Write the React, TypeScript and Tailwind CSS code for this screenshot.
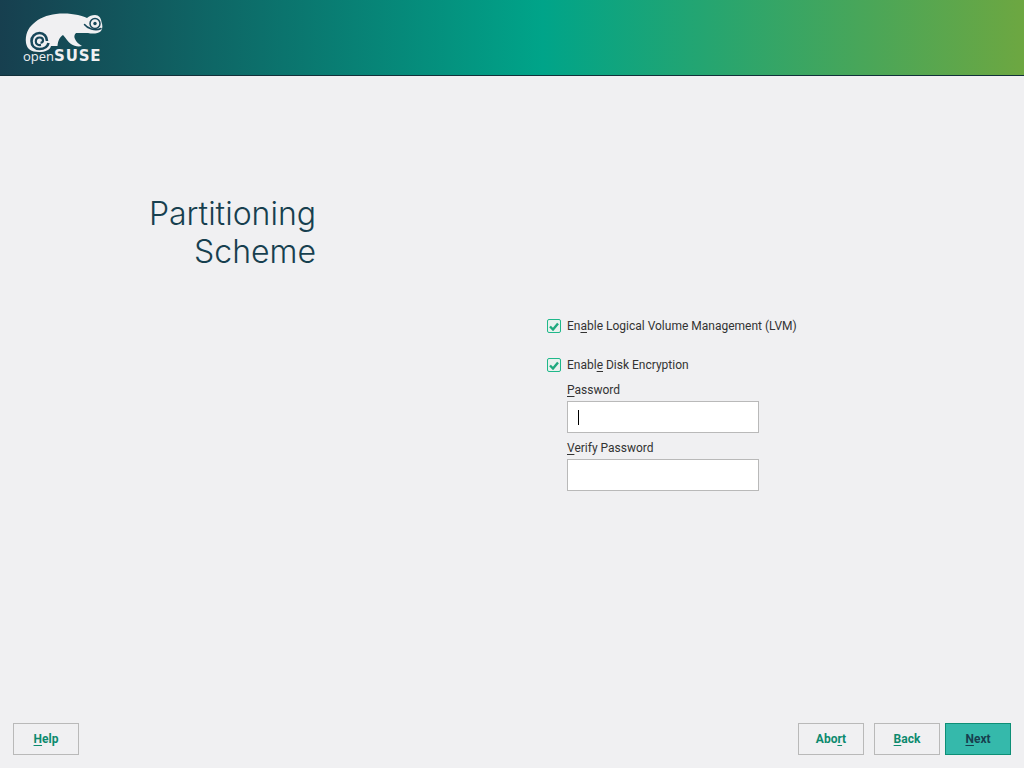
function Mnemonic({ text, at }: { text: string; at: number }) {
  return (
    <>
      {text.slice(0, at)}
      <span className="underline underline-offset-2">{text[at]}</span>
      {text.slice(at + 1)}
    </>
  );
}

function Logo() {
  return (
    <div className="relative w-[84px] h-[52px] ml-[22px] mt-[12px]">
      <svg width="84" height="42" viewBox="22 12 84 42" className="block">
        <path
          fill="#f0f0f2"
          d="M26 43C25 35 28 28 33 24C39 18 47 15 56 14C65 13 72 14 78 15C82 16 85 17 87 18C89 16 92 15 95 15C99 15 101 18 101.500 22C102.500 25 103 28 101 31C98 34 92 34 88 33C84 33 79 33 76 33C74 35 74 37 75 39C76 42 79 44 82 46C78 47 74 46 71 44C68 42 66 38 63 35C60 37 58 40 57.500 46L51 46C50 50 45 52 39 52C31 52 27 49 26 43Z"
        />
        <path
          fill="none"
          stroke="#17475a"
          strokeWidth="2.6"
          d="M48.500 43C47.500 47 44 49 39.500 49C34.500 49 31.500 45.500 31.500 41C31.500 36.500 35 33 39.500 33C44 33 47 36.500 47 41"
        />
        <path
          fill="none"
          stroke="#17475a"
          strokeWidth="2.200"
          d="M41 45C38 45.500 35.800 44 35.800 41.500C35.800 39 37.500 37.500 39.800 37.500C41.800 37.500 43 39 43 40.500C43 42 42 42.800 40.500 42.500"
        />
        <path fill="none" stroke="#17475a" strokeWidth="1.500" strokeLinecap="round" d="M84.500 24.500C87 28 95 31.500 101 28.500" />
        <circle cx="95" cy="23.500" r="5" fill="#f0f0f2" stroke="#17475a" strokeWidth="1.500" />
        <circle cx="95" cy="23.500" r="1.700" fill="#17475a" />
      </svg>
      <div className="absolute left-[1px] top-[37px] flex items-baseline text-[#f0f0f2] leading-none">
        <span className="text-[13px] font-['Open_Sans',sans-serif]">open</span>
        <span className="text-[15px] font-bold tracking-[0.8px] font-['DejaVu_Sans',sans-serif]">SUSE</span>
      </div>
    </div>
  );
}

function Check({ label, at }: { label: string; at: number }) {
  return (
    <label className="flex items-center gap-[6px] h-[20px]">
      <span className="w-[14px] h-[14px] rounded-[2px] border border-[#1fb88a] bg-[#e9f1ee] flex items-center justify-center">
        <svg width="10" height="9" viewBox="0 0 10 9">
          <path d="M1 4.500L4 7.500L9 1.500" fill="none" stroke="#1fa97e" strokeWidth="2.400" />
        </svg>
      </span>
      <span>
        <Mnemonic text={label} at={at} />
      </span>
    </label>
  );
}

function Field({ label, caret }: { label: string; caret?: boolean }) {
  return (
    <div className="flex flex-col">
      <span className="h-[22px] leading-[22px]">
        <Mnemonic text={label} at={0} />
      </span>
      <div className="w-[192px] h-[32px] bg-white border border-[#b9b9b9] flex items-center pl-[10px]">
        {caret && <span className="w-px h-[15px] bg-black" />}
      </div>
    </div>
  );
}

function Btn({ label, at, primary }: { label: string; at: number; primary?: boolean }) {
  return (
    <button
      className={
        primary
          ? "w-[66px] h-[32px] border border-[#0d8f76] bg-[#35b9ab] text-[#173f4f] font-bold text-[12px]"
          : "w-[66px] h-[32px] border border-[#b9b9b9] text-[#0c8a6e] font-bold text-[12px]"
      }
    >
      <Mnemonic text={label} at={at} />
    </button>
  );
}

export default function App() {
  return (
    <div className="w-[1024px] h-[768px] flex flex-col bg-[#f0f0f2] text-[#333333] text-[12px] font-['Roboto',sans-serif]">
      <header className="h-[76px] shrink-0 border-b border-[#12303a] bg-[linear-gradient(90deg,#173f4f_0%,#00a489_53%,#6da741_100%)]">
        <Logo />
      </header>
      <main className="flex-1 flex">
        <div className="w-[316px] pt-[119px] text-right">
          <h1 className="text-[32px] leading-[38px] font-light text-[#173f4f] font-['Inter',sans-serif]">
            Partitioning
            <br />
            Scheme
          </h1>
        </div>
        <div className="ml-[231px] pt-[240px] flex flex-col">
          <Check label="Enable Logical Volume Management (LVM)" at={2} />
          <div className="mt-[19px]">
            <Check label="Enable Disk Encryption" at={5} />
          </div>
          <div className="ml-[20px] mt-[4px] flex flex-col gap-[4px]">
            <Field label="Password" caret />
            <Field label="Verify Password" />
          </div>
        </div>
      </main>
      <footer className="h-[45px] shrink-0 flex pl-[13px] pr-[13px]">
        <Btn label="Help" at={0} />
        <div className="ml-auto flex">
          <Btn label="Abort" at={3} />
          <div className="ml-[10px]">
            <Btn label="Back" at={0} />
          </div>
          <div className="ml-[5px]">
            <Btn label="Next" at={0} primary />
          </div>
        </div>
      </footer>
    </div>
  );
}
